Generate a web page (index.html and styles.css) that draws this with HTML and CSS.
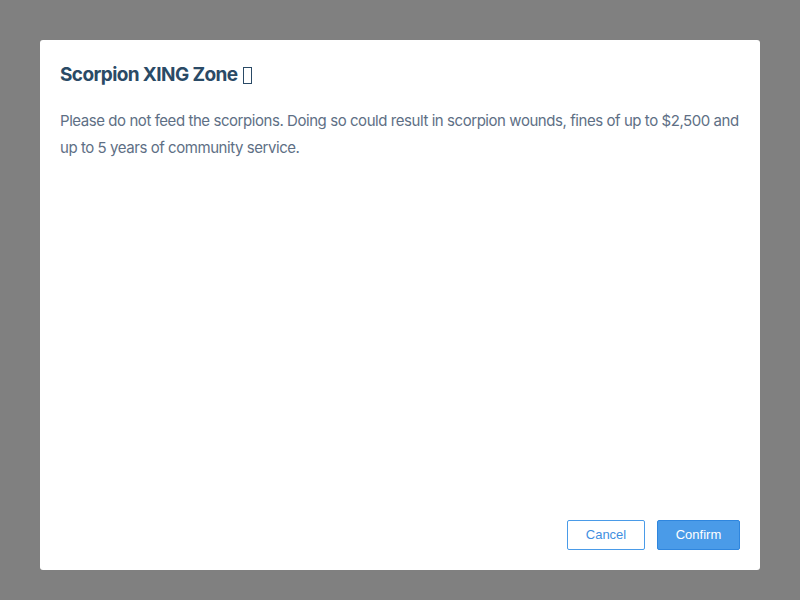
FILE: index.html
```html
<!DOCTYPE html>
<html>
<head>
<meta charset="utf-8">
<link rel="stylesheet" href="styles.css">
</head>
<body>
<div class="overlay">
  <div class="modal">
    <h1 class="title">Scorpion XING Zone <span class="tofu" aria-label="scorpion"></span></h1>
    <p class="text">Please do not feed the scorpions. Doing so could result in scorpion wounds, fines of up to $2,500 and up to 5 years of community service.</p>
    <div class="actions">
      <button class="btn btn-cancel">Cancel</button>
      <button class="btn btn-confirm">Confirm</button>
    </div>
  </div>
</div>
</body>
</html>
```
FILE: styles.css
```css
html, body {
  margin: 0;
  padding: 0;
  width: 800px;
  height: 600px;
  overflow: hidden;
}
.overlay {
  width: 800px;
  height: 600px;
  background: #808080;
  padding: 40px;
  box-sizing: border-box;
}
.modal {
  background: #fff;
  width: 720px;
  height: 530px;
  border-radius: 3px;
  box-sizing: border-box;
  padding: 20px;
  display: flex;
  flex-direction: column;
  font-family: Inter, "Noto Sans", sans-serif;
}
.title {
  margin: 0;
  font-size: 19px;
  font-weight: 700;
  color: #2a4a66;
  line-height: 29px;
  letter-spacing: -0.6px;
}
.tofu {
  display: inline-block;
  width: 7px;
  height: 15px;
  border: 1.5px solid #2a4a66;
  vertical-align: -3px;
  margin-left: 2px;
}
.text {
  margin: 18px -4px 0 0;
  font-size: 15px;
  line-height: 27px;
  color: #5e6f85;
  letter-spacing: -0.44px;
}
.actions {
  margin-top: auto;
  display: flex;
  justify-content: flex-end;
  gap: 12px;
}
.btn {
  font-family: "Liberation Sans", Arial, sans-serif;
  font-size: 13px;
  height: 30px;
  border-radius: 2px;
  box-sizing: border-box;
  cursor: pointer;
  padding: 0 0 1px;
}
.btn-cancel {
  width: 78px;
  background: #fff;
  color: #3f8fdf;
  border: 1px solid #4a9be8;
}
.btn-confirm {
  width: 83px;
  background: #4a9be8;
  color: #fff;
  border: 1px solid #2f86de;
}
```
